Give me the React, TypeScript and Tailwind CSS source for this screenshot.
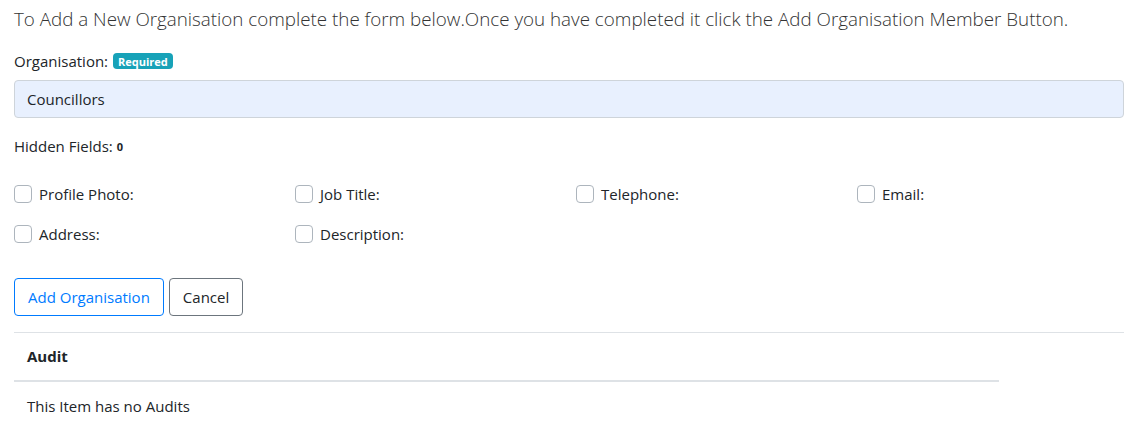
import React from 'react';

const fields = ['Profile Photo:', 'Job Title:', 'Telephone:', 'Email:', 'Address:', 'Description:'];

const Checkbox: React.FC<{ label: string }> = ({ label }) => (
  <label className="flex items-center h-[24px]">
    <span className="w-[18px] h-[18px] rounded-[4px] border border-[#adb5bd] bg-white mr-[7px] shrink-0" />
    <span>{label}</span>
  </label>
);

export default function App() {
  return (
    <div
      className="pl-[14px] pr-[12px] text-[15px] leading-[21px] text-[#212529] bg-white min-h-[425px]"
      style={{ fontFamily: '"Open Sans", "Noto Sans", sans-serif' }}
    >
      <p className="pt-[4px] text-[18.8px] leading-[30px] font-light text-[#333]">
        To Add a New Organisation complete the form below.Once you have completed it click the Add Organisation Member Button.
      </p>

      <div className="mt-[16px] h-[22px] flex items-center">
        <span>Organisation:</span>
        <span className="ml-[5px] px-[5px] h-[16px] flex items-center rounded-[4px] bg-[#17a2b8] text-white text-[11px] font-bold">
          Required
        </span>
      </div>

      <div className="mt-[8px] h-[38px] rounded-[4px] border border-[#ced4da] bg-[#e8f0fe] px-[12px] flex items-center">
        Councillors
      </div>

      <div className="mt-[18px] flex items-center">
        <span>Hidden Fields:</span>
        <span className="ml-[4px] text-[11px] font-bold">0</span>
      </div>

      <div className="mt-[25px] grid grid-cols-[281px_281px_281px_1fr] gap-y-[16px]">
        {fields.map((f) => (
          <Checkbox key={f} label={f} />
        ))}
      </div>

      <div className="mt-[32px] flex gap-[5px]">
        <button className="h-[38px] px-[13px] rounded-[4px] border border-[#007bff] text-[#007bff]">
          Add Organisation
        </button>
        <button className="h-[38px] px-[13px] rounded-[4px] border border-[#6c757d] text-[#212529]">
          Cancel
        </button>
      </div>

      <div className="mt-[16px] border-t border-[#dee2e6]" />

      <table className="w-[985px] text-left border-collapse">
        <thead>
          <tr className="border-b-2 border-[#dee2e6]">
            <th className="px-[13px] h-[48px] font-bold">Audit</th>
          </tr>
        </thead>
        <tbody>
          <tr>
            <td className="px-[13px] h-[50px]">This Item has no Audits</td>
          </tr>
        </tbody>
      </table>
    </div>
  );
}
